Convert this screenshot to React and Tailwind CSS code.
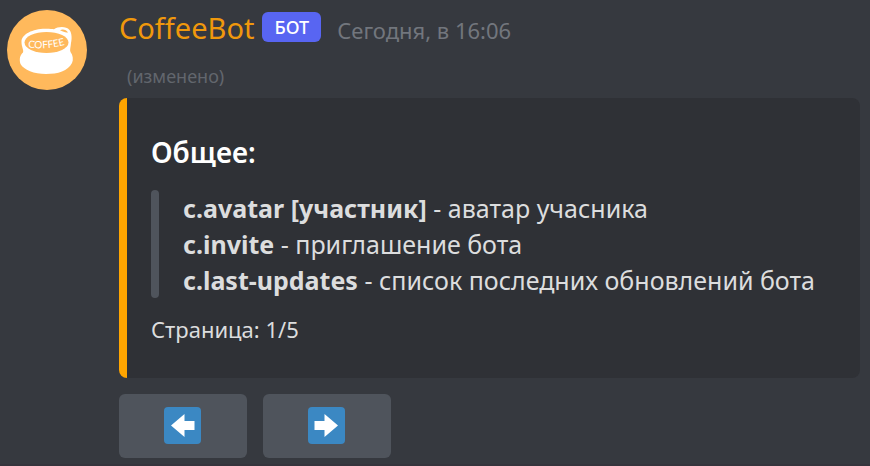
import React from "react";

const commands = [
  { name: "c.avatar [участник]", text: "аватар учасника" },
  { name: "c.invite", text: "приглашение бота" },
  { name: "c.last-updates", text: "список последних обновлений бота" },
];

function Avatar() {
  return (
    <svg viewBox="0 0 80 80" className="size-20 shrink-0" role="img" aria-label="CoffeeBot">
      <circle cx="40" cy="40" r="40" fill="#ffb95c" />
      <path
        d="M14.500 32C14.500 24 26 19 38 18.800C42 18.700 45 19 47 19.300C51 16.500 59 16 62.500 20C65 23 65 29 64 33C63.800 37 62.500 40 63.500 42C66 45 66.500 50 65 53C61 61 51 64 39 64C27 64 17 60 13.500 54C12 49 13 45 16 42.500C17 40 14.500 37 14.500 32Z"
        fill="#fff"
      />
      <ellipse cx="39.500" cy="32.500" rx="22" ry="10.500" fill="#ffb95c" />
      <path d="M53 20.200C56 18.800 59.500 20 61 22.500C59 22.500 56 21.800 53 20.200Z" fill="#ffb95c" />
      <path id="cup-label" d="M21 37.500Q39 40 60 34.500" fill="none" />
      <text fill="#fff" fontSize="10" fontWeight="400" className="font-['Lato',sans-serif]">
        <textPath href="#cup-label">COFFEE</textPath>
      </text>
    </svg>
  );
}

function PageButton({ label, back }) {
  return (
    <button
      type="button"
      aria-label={label}
      className="flex h-16 w-32 items-center justify-center rounded-md bg-[#4f545c]"
    >
      <svg viewBox="0 0 38 38" className="size-[38px]" aria-hidden="true">
        <rect width="37" height="37" rx="4" fill="#3b88c3" />
        <path
          d={back ? "M7 18.500L20.500 7V14H30.500V23H20.500V30Z" : "M30 18.500L16.500 7V14H6.500V23H16.500V30Z"}
          fill="#fff"
        />
      </svg>
    </button>
  );
}

export default function App() {
  return (
    <main className="flex min-h-screen items-start gap-8 border-b-2 border-[#35343c] bg-[#36393f] pt-2.5 pr-2.5 pl-[7px] font-['Noto_Sans',sans-serif]">
      <Avatar />
      <article className="min-w-0 flex-1">
        <header>
          <div className="flex h-9 items-center">
            <h1 className="text-[29px] leading-9 text-[#f0980c]">CoffeeBot</h1>
            <span className="mt-0.5 ml-2 flex h-[30px] items-center self-start rounded-md bg-[#5865f2] px-3 text-lg font-medium text-white">
              БОТ
            </span>
            <time className="ml-4 pt-1 text-[22px] leading-8 text-[#72767d]">Сегодня, в 16:06</time>
          </div>
          <p className="mt-[18px] pl-2 text-lg leading-6 text-[#62666d]">(изменено)</p>
        </header>

        <section className="mt-2.5 rounded-lg border-l-8 border-[#ffa500] bg-[#2f3136] pt-9 pr-8 pb-[34px] pl-6 text-[#dcddde]">
          <h2 className="text-[28px] leading-9 font-semibold text-white">Общее:</h2>
          <div className="mt-5 flex gap-6">
            <div className="w-2 shrink-0 rounded bg-[#4f545c]" />
            <ul className="text-[25px] leading-9">
              {commands.map((c) => (
                <li key={c.name}>
                  <strong className="font-bold">{c.name}</strong> - {c.text}
                </li>
              ))}
            </ul>
          </div>
          <p className="mt-4 text-[22px] leading-[30px]">Страница: 1/5</p>
        </section>

        <nav className="mt-4 flex gap-4" aria-label="Страницы">
          <PageButton label="Назад" back />
          <PageButton label="Вперёд" />
        </nav>
      </article>
    </main>
  );
}
